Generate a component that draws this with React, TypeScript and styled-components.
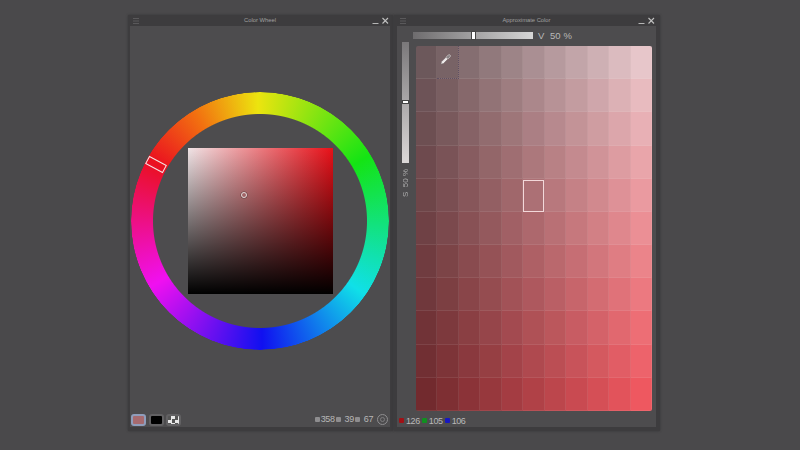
import React from "react";
import styled, { createGlobalStyle } from "styled-components";

const Global = createGlobalStyle`
  html, body { margin: 0; padding: 0; width: 800px; height: 450px; overflow: hidden; background: #4a494b; }
  #root { width: 800px; height: 450px; }
`;

const Desktop = styled.div`
  width: 800px; height: 450px; box-sizing: border-box;
  padding: 15px 0 0 128px;
  display: flex; gap: 1px; align-items: flex-start;
  font-family: "Liberation Sans", Arial, sans-serif;
  background: #4a494b;
`;
const Panel = styled.section<{ $w: number; $pl: number }>`
  width: ${p => p.$w}px; height: 416px; box-sizing: border-box;
  background: #3d3c3e;
  padding: 0 ${p => (p.$pl === 2 ? 3 : 4)}px 4px ${p => p.$pl}px;
  display: flex; flex-direction: column;
  box-shadow: 0 0 2px rgba(40,40,42,.6);
`;
const TitleBar = styled.header`
  height: 11px; flex: none; position: relative;
  display: flex; align-items: center; justify-content: center;
`;
const Title = styled.span`
  font-size: 5.8px; color: #a0a0a0; line-height: 11px;
`;
const Grip = styled.svg`
  position: absolute; left: 3px; top: 3px; width: 6px; height: 6px;
`;
const WinBtns = styled.svg`
  position: absolute; right: 0; top: 1px; width: 18px; height: 9px;
`;
const Body = styled.div`
  flex: 1; background: #4d4c4e; display: flex; flex-direction: column; min-height: 0;
`;
const Wheel = styled.div`
  width: 258px; height: 258px; margin: 66px 0 0 1px; flex: none;
  position: relative; display: flex; align-items: center; justify-content: center;
`;
const Ring = styled.div`
  position: absolute; inset: 0; border-radius: 50%;
  background: conic-gradient(from 299deg, #ea1020, #f27010 30deg, #ece40f 60deg, #14e414 120deg, #10e0e8 186deg, #1010f0 240deg, #f010f0 300deg, #ea1020 360deg);
  -webkit-mask: radial-gradient(circle closest-side, transparent 106.5px, #000 107.5px, #000 128.5px, transparent 129.5px);
  mask: radial-gradient(circle closest-side, transparent 106.5px, #000 107.5px, #000 128.5px, transparent 129.5px);
`;
const HueMark = styled.div`
  position: absolute; left: 15px; top: 68px; width: 20px; height: 9px;
  box-sizing: border-box; border: 1.5px solid #f4e4e4; transform: rotate(28deg);
`;
const SVSquare = styled.div`
  width: 145px; height: 146px; position: relative; z-index: 1;
  background:
    linear-gradient(to bottom, rgba(0,0,0,0), #000),
    linear-gradient(to right, #f0e4e6, #e81018);
`;
const SVCursor = styled.div`
  position: absolute; left: 53px; top: 44px; width: 4px; height: 4px; border-radius: 50%;
  border: 1px solid #e0d8d8; box-shadow: 0 0 0 .5px rgba(70,50,50,.7);
`;
const WheelFooter = styled.footer`
  margin-top: auto; height: 14px; padding: 0 2px 1px 1px; box-sizing: border-box;
  display: flex; align-items: center; gap: 2px;
`;
const Swatch = styled.div<{ $bg: string; $on?: boolean }>`
  width: 15px; height: 12px; border-radius: 3px; box-sizing: border-box;
  background: ${p => p.$bg};
  border: 2px solid ${p => (p.$on ? "#8f9dbb" : "#626163")};
  margin-right: ${p => (p.$on ? 1 : 0)}px;
`;
const Checker = styled(Swatch)`
  background: repeating-conic-gradient(#e8e8e8 0 25%, #555 0 50%) 0 0 / 7px 7px;
`;
const Values = styled.div`
  margin-left: auto; display: flex; align-items: center;
  font-size: 9px; letter-spacing: -.4px; color: #b6b6b6; line-height: 11px;
`;
const Value = styled.span<{ $ml?: number }>`
  margin-left: ${p => p.$ml ?? 0}px;
`;
const TinyBox = styled.i<{ $ml?: number }>`
  display: block; width: 5px; height: 5px; border-radius: 1px; background: #8e8d8f;
  margin-left: ${p => p.$ml ?? 0}px;
`;
const Dial = styled.div`
  width: 9px; height: 9px; border: 1px solid #8f8e90; border-radius: 50%; margin-left: 4px;
  display: flex; align-items: center; justify-content: center;
  &::after { content: ""; width: 3px; height: 3px; border-radius: 50%; border: 1px solid #7d7c7e; }
`;
const TopRow = styled.div`
  height: 15px; flex: none; padding: 3px 0 0 16px; box-sizing: border-box;
  display: flex; align-items: center;
`;
const HSlider = styled.div`
  width: 120px; height: 7px; position: relative; flex: none;
  background: linear-gradient(to right, #6e6c6e, #d6d6d6);
`;
const HThumb = styled.div`
  position: absolute; left: 58px; top: -1px; width: 3px; height: 7px;
  background: #fff; border: 1px solid #444;
`;
const VLabel = styled.span`
  font-size: 9.5px; color: #b8b8b8; margin-left: 5px; white-space: pre; letter-spacing: .1px;
`;
const Main = styled.div`
  flex: 1; display: flex; min-height: 0; padding: 1px 0 0 5px;
`;
const SideCol = styled.div`
  width: 7px; flex: none; display: flex; flex-direction: column; align-items: center;
`;
const VSlider = styled.div`
  width: 7px; height: 121px; flex: none; position: relative;
  background: linear-gradient(to bottom, #7a787a, #dcd8d8);
`;
const VThumb = styled.div`
  position: absolute; left: 0; top: 58px; width: 5px; height: 2px;
  background: #fff; border: 1px solid #444;
`;
const SideText = styled.span`
  writing-mode: vertical-rl; transform: rotate(180deg);
  font-size: 8px; color: #aaa; margin-top: 6px; white-space: pre; line-height: 8px;
`;
const Grid = styled.div`
  width: 236px; height: 365px; margin: 4px 0 0 7px; flex: none; position: relative;
  border-radius: 2px; overflow: hidden;
  display: grid; grid-template-columns: repeat(11, 1fr); grid-template-rows: repeat(11, 1fr);
`;
const Cell = styled.div`
  box-shadow: inset -1px -1px 0 rgba(255,235,235,.09);
`;
const HoverCell = styled.div`
  position: absolute; left: 21px; top: 0; width: 22px; height: 33px; box-sizing: border-box;
  border-right: 1px dotted rgba(70,60,90,.6); border-bottom: 1px dotted rgba(70,60,90,.6);
`;
const Selected = styled.div`
  position: absolute; left: 107px; top: 134px; width: 21px; height: 32px; box-sizing: border-box;
  border: 1px solid #f3d8da;
`;
const Dropper = styled.svg`
  position: absolute; left: 24px; top: 8px; width: 11px; height: 11px;
`;
const RgbFooter = styled.footer`
  height: 16px; flex: none; padding: 3px 0 0 2px; box-sizing: border-box;
  display: flex; align-items: center; font-size: 9px; letter-spacing: -.4px; color: #b9b9b9;
`;
const Chip = styled.i<{ $bg: string }>`
  display: block; width: 5px; height: 5px; background: ${p => p.$bg}; margin-right: 2px; border-radius: 1px;
`;
const ChipValue = styled.span`
  margin-right: 2px;
`;

const lerp = (a: number, b: number, t: number) => Math.round(a + (b - a) * t);
const TL = [108, 88, 91], TR = [231, 198, 202], BL = [114, 42, 46], BR = [238, 88, 96];
const cellColor = (r: number, c: number) => {
  const x = c / 10, y = r / 10;
  const ch = [0, 1, 2].map(i => lerp(lerp(TL[i], TR[i], x), lerp(BL[i], BR[i], x), y));
  return `rgb(${ch.join(",")})`;
};

const WindowButtons = () => (
  <WinBtns viewBox="0 0 18 9">
    <rect x="0.5" y="7" width="6" height="1" fill="#b5b5b5" />
    <path d="M10.5 2l5.5 5.5M16 2l-5.5 5.5" stroke="#c0c0c0" strokeWidth="1.1" />
  </WinBtns>
);
const GripIcon = () => (
  <Grip viewBox="0 0 6 6">
    <path d="M0 .5h6M0 3h6M0 5.5h6" stroke="#5a595b" strokeWidth="1" />
  </Grip>
);

export default function App() {
  const cells = [];
  for (let r = 0; r < 11; r++) for (let c = 0; c < 11; c++) cells.push(<Cell key={`${r}-${c}`} style={{ background: cellColor(r, c) }} />);
  return (
    <Desktop>
      <Global />
      <Panel $w={265} $pl={2}>
        <TitleBar>
          <GripIcon />
          <Title>Color Wheel</Title>
          <WindowButtons />
        </TitleBar>
        <Body>
          <Wheel>
            <Ring />
            <HueMark />
            <SVSquare><SVCursor /></SVSquare>
          </Wheel>
          <WheelFooter>
            <Swatch $bg="#a66a6f" $on />
            <Swatch $bg="#000" />
            <Checker $bg="#fff" />
            <Values>
              <TinyBox />
              <Value $ml={1}>358</Value>
              <TinyBox $ml={1} />
              <Value $ml={4}>39</Value>
              <TinyBox $ml={1} />
              <Value $ml={4}>67</Value>
              <Dial />
            </Values>
          </WheelFooter>
        </Body>
      </Panel>
      <Panel $w={266} $pl={3}>
        <TitleBar>
          <GripIcon />
          <Title>Approximate Color</Title>
          <WindowButtons />
        </TitleBar>
        <Body>
          <TopRow>
            <HSlider><HThumb /></HSlider>
            <VLabel>V  50 %</VLabel>
          </TopRow>
          <Main>
            <SideCol>
              <VSlider><VThumb /></VSlider>
              <SideText>S  50 %</SideText>
            </SideCol>
            <Grid>
              {cells}
              <HoverCell />
              <Selected />
              <Dropper viewBox="0 0 11 11">
                <path d="M.8 10.2l.8-2.6 4.4-4.4 1.9 1.9-4.4 4.4z" fill="#eeeaea" stroke="#6a5f60" strokeWidth=".5" />
                <path d="M6 3.2l2.2-2.2a1 1 0 0 1 1.9 1.9L7.9 5.1z" fill="#8a8486" stroke="#e4e0e0" strokeWidth=".5" />
              </Dropper>
            </Grid>
          </Main>
          <RgbFooter>
            <Chip $bg="#a01015" /><ChipValue>126</ChipValue>
            <Chip $bg="#109020" /><ChipValue>105</ChipValue>
            <Chip $bg="#1818c0" /><ChipValue>106</ChipValue>
          </RgbFooter>
        </Body>
      </Panel>
    </Desktop>
  );
}
